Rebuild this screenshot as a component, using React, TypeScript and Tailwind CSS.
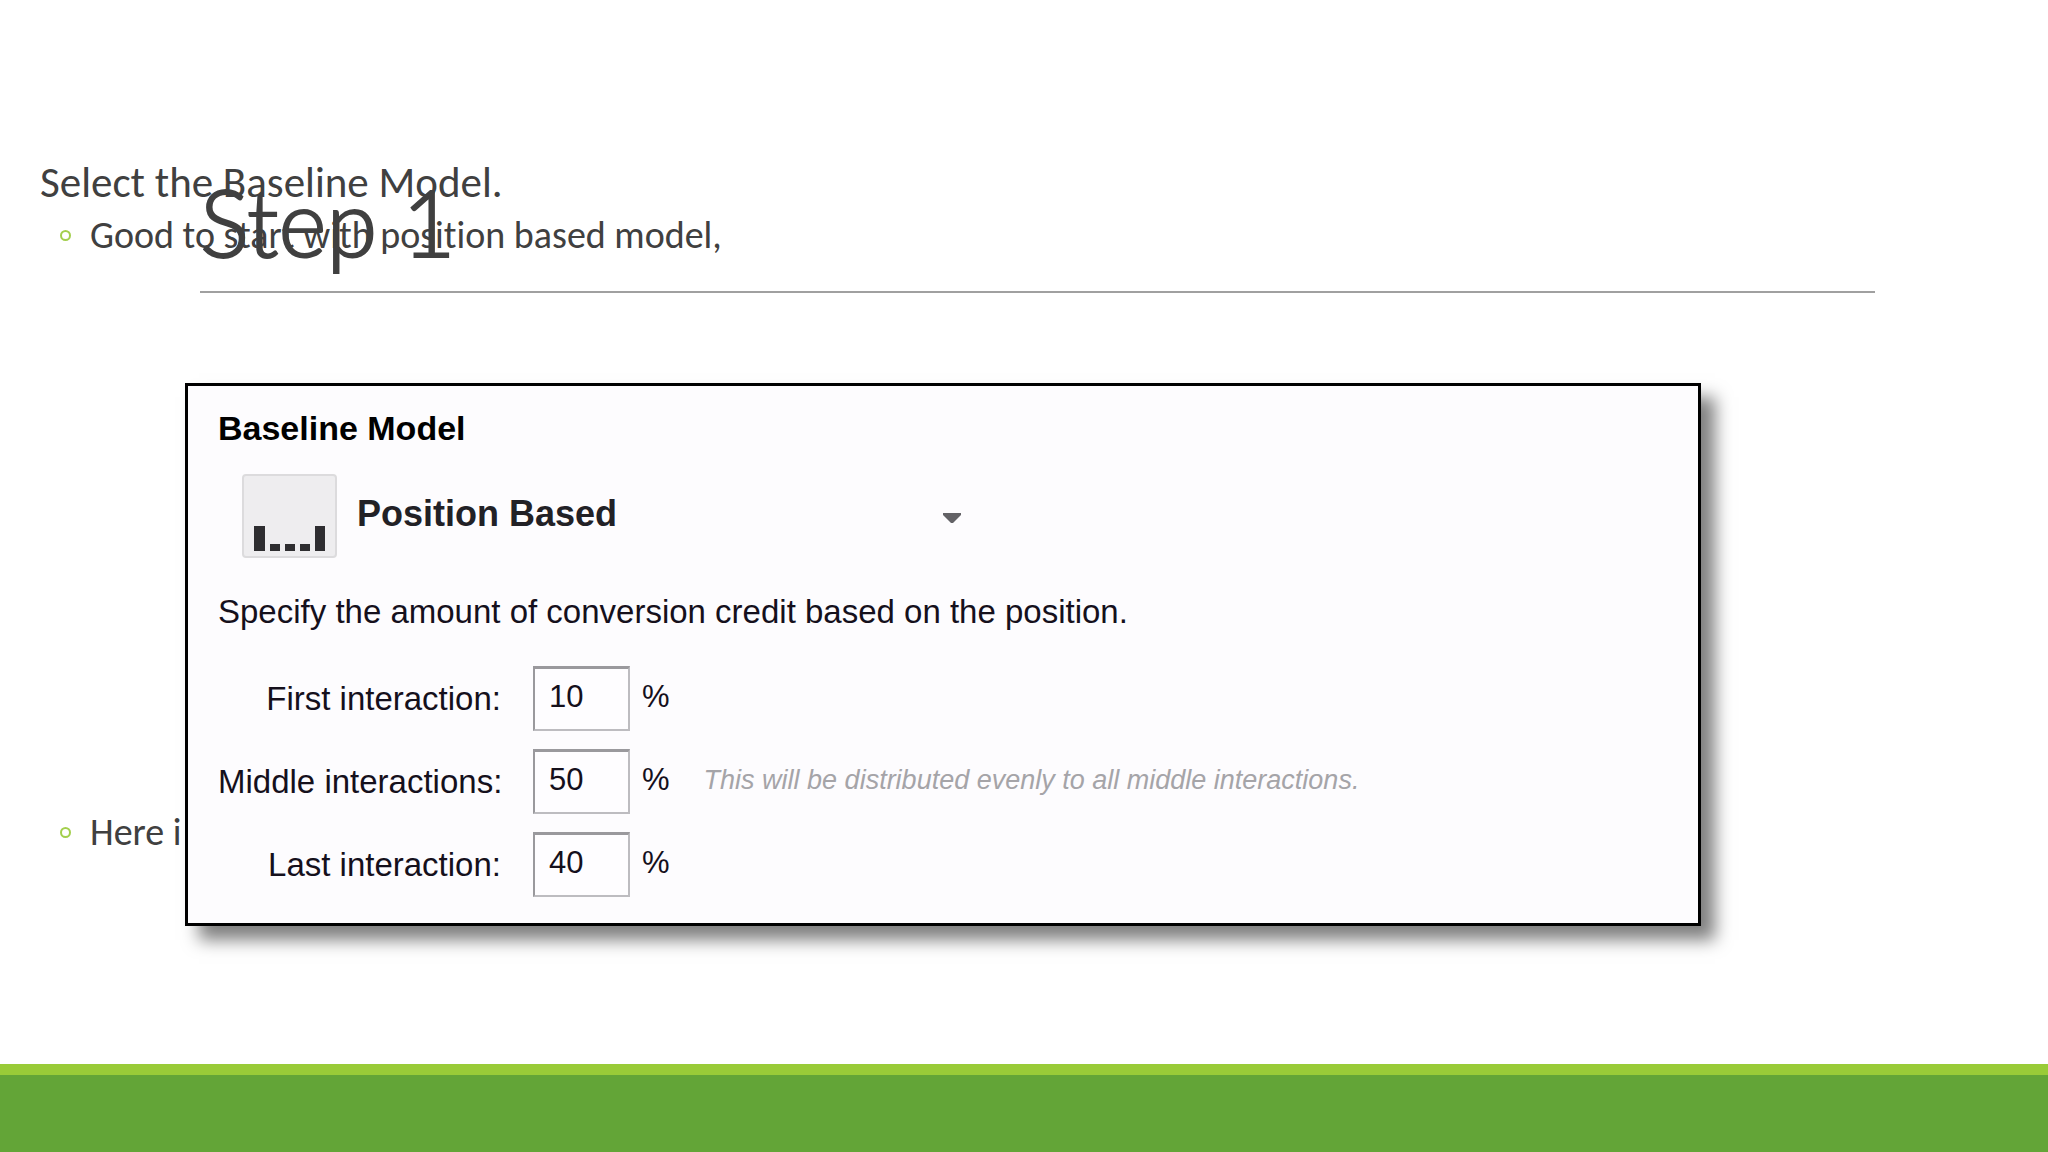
import { useState } from "react";

const fields = [
  { id: "first", label: "First interaction:", value: "10", note: "" },
  {
    id: "middle",
    label: "Middle interactions:",
    value: "50",
    note: "This will be distributed evenly to all middle interactions.",
  },
  { id: "last", label: "Last interaction:", value: "40", note: "" },
];

const Bullet = () => (
  <span className="size-[11px] shrink-0 rounded-full border-2 border-[#a3cf4d]" />
);

const ModelIcon = () => (
  <svg
    viewBox="0 0 95 84"
    className="h-[84px] w-[95px] shrink-0"
    aria-hidden="true"
  >
    <rect x="1" y="1" width="93" height="82" rx="3" fill="#eeedef" stroke="#dcdbdd" strokeWidth="2" />
    <g fill="#2e2d30">
      <rect x="12" y="52" width="11" height="25" />
      <rect x="28" y="70" width="10" height="7" />
      <rect x="43" y="70" width="10" height="7" />
      <rect x="58" y="70" width="10" height="7" />
      <rect x="73" y="52" width="10" height="25" />
    </g>
  </svg>
);

const BaselineModel = () => {
  const [values, setValues] = useState(fields.map((f) => f.value));

  const handleChange = (index: number, value: string) => {
    setValues(values.map((v, i) => (i === index ? value : v)));
  };

  return (
    <form
      onSubmit={(e) => e.preventDefault()}
      className="border-[3px] border-black bg-[#fdfcfe] px-[30px] pt-6 pb-[26px] font-['Liberation_Sans',Arial,sans-serif] text-[33px] leading-10 text-[#15101c] shadow-[14px_14px_16px_rgba(0,0,0,0.5)]"
    >
      <label htmlFor="model" className="block text-[34px] leading-9 font-bold text-black">
        Baseline Model
      </label>

      <div className="mt-7 flex items-center gap-5 pl-6">
        <ModelIcon />
        <div className="grid w-[612px] items-center pb-1">
          <select
            id="model"
            className="col-start-1 row-start-1 h-12 w-full appearance-none bg-transparent text-[36px] font-bold text-[#222126] focus-visible:outline-none"
          >
            <option>Position Based</option>
          </select>
          <svg
            viewBox="0 0 18 10"
            className="pointer-events-none col-start-1 row-start-1 mt-2 mr-2 h-[10px] w-[18px] justify-self-end"
            aria-hidden="true"
          >
            <path d="M0 0h18v2l-8 8h-2l-8-8z" fill="#636266" />
          </svg>
        </div>
      </div>

      <p className="mt-[34px]">
        Specify the amount of conversion credit based on the position.
      </p>

      <div className="mt-[34px] flex flex-col gap-[18px]">
        {fields.map((field, i) => (
          <div key={field.id} className="flex items-center">
            <label htmlFor={field.id} className="w-[283px] text-right whitespace-nowrap">
              {field.label}
            </label>
            <input
              id={field.id}
              type="text"
              value={values[i]}
              onChange={(e) => handleChange(i, e.target.value)}
              className="ml-8 h-[65px] w-[97px] border-2 border-t-[3px] border-[#bdbcc0] border-t-[#9a999d] border-l-[#9a999d] bg-[#fefdff] px-[14px] pb-1 text-[31px] focus-visible:outline-none"
            />
            <span className="ml-3 pb-1 text-[31px]">%</span>
            {field.note && (
              <em className="ml-[34px] pb-1 text-[27px] text-[#a5a4a8]">{field.note}</em>
            )}
          </div>
        ))}
      </div>
    </form>
  );
};

const App = () => {
  return (
    <div className="flex min-h-screen w-full flex-col bg-white font-[Carlito,Lato,sans-serif] text-[#404040] [font-variant-ligatures:none]">
      {/* title, body and picture share one cell, so they overlap */}
      <main className="grid flex-1 grid-cols-1 items-start">
        <header className="col-start-1 row-start-1 mr-[173px] ml-[200px] border-b-2 border-[#a0a0a0] pt-[156px] pb-1">
          <h1 className="font-[Lato,sans-serif] text-[92px] leading-[131px] font-light [-webkit-text-stroke:2px_#404040]">
            Step 1
          </h1>
        </header>

        <div className="col-start-1 row-start-1 pt-[159px] pl-10">
          <p className="text-[43px] leading-12">Select the Baseline Model.</p>
          <ul className="pt-1 pl-5 text-[38px] leading-12">
            <li className="flex items-center gap-[19px]">
              <Bullet />
              Good to start with position based model,
            </li>
            <li className="mt-[549px] flex items-center gap-[19px]">
              <Bullet />
              Here i
            </li>
          </ul>
        </div>

        <section className="col-start-1 row-start-1 mt-[383px] mr-[347px] ml-[185px]">
          <BaselineModel />
        </section>
      </main>

      <footer className="h-[88px] border-t-[11px] border-[#99cb38] bg-[#63a537]" />
    </div>
  );
};

export default App;
